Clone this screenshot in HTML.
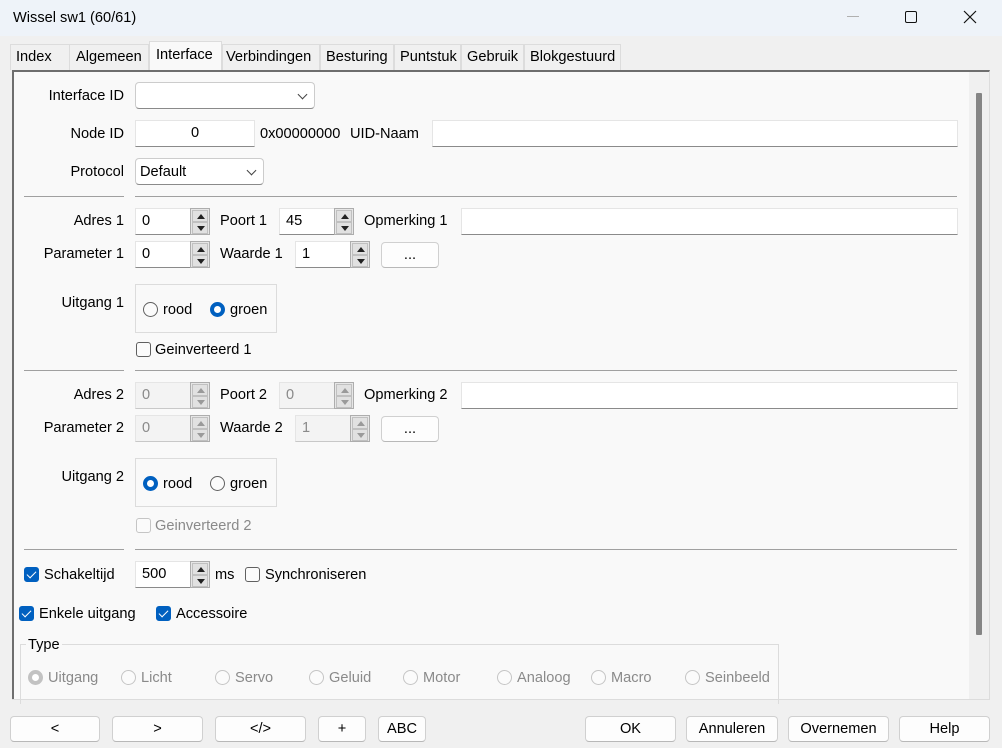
<!DOCTYPE html>
<html><head><meta charset="utf-8"><style>
*{box-sizing:border-box;margin:0;padding:0}
body{width:1002px;height:748px;overflow:hidden;background:#f0f0f0;font:14.6px "Liberation Sans",sans-serif;color:#000;position:relative}
.a{position:absolute}
.t{position:absolute;height:18px;line-height:18px;white-space:nowrap}
.r{text-align:right}
.in{position:absolute;background:#fff;border:1px solid #e5e5e5;border-bottom:1px solid #8a8a8a;height:27px;line-height:25px;padding-left:6px}
.dis{background:#f3f3f3;color:#8a8a8a;border-bottom-color:#c8c8c8}
.sp{position:absolute;width:20px;height:27px;border:1px solid #adadad;background:#e6e6e6}
.sp i{position:absolute;left:1px;width:16px;height:12px;background:#e1e1e1;border:1px solid #c0c0c0}
.sp i:before{content:"";position:absolute;left:4px;border-left:4px solid transparent;border-right:4px solid transparent}
.sp .u{top:1px}.sp .u:before{top:3px;border-bottom:5px solid #222}
.sp .d{top:13px}.sp .d:before{top:3px;border-top:5px solid #222}
.sp.x .u:before{border-bottom-color:#9a9a9a}.sp.x .d:before{border-top-color:#9a9a9a}
.cb{position:absolute;background:#fff;border:1px solid #ccc;border-bottom:1px solid #8a8a8a;border-radius:4px;height:27px}
.cb:after{content:"";position:absolute;right:8px;top:8px;width:6px;height:6px;border-right:1px solid #444;border-bottom:1px solid #444;transform:rotate(45deg)}
.btn{position:absolute;background:#fdfdfd;border:1px solid #d0d0d0;border-bottom-color:#b8b8b8;border-radius:4px;height:26px;line-height:24px;text-align:center}
.chk{position:absolute;width:15px;height:15px;border:1px solid #606060;border-radius:3px;background:#fbfbfb}
.chk.on{background:#0060c0;border-color:#0060c0}
.chk.on:after{content:"";position:absolute;left:4px;top:1px;width:4px;height:8px;border-right:1.5px solid #fff;border-bottom:1.5px solid #fff;transform:rotate(45deg)}
.chk.x{border-color:#c5c5c5}
.rad{position:absolute;width:15px;height:15px;border:1px solid #606060;border-radius:50%;background:#fbfbfb}
.rad.on{border:4px solid #0060c0;background:#fff}
.rad.x{border-color:#c5c5c5}
.rad.xo{border:4px solid #c2c2c2;background:#fff}
.g{color:#8a8a8a}
.sep{position:absolute;height:1px;background:#a0a0a0}
.box{position:absolute;border:1px solid #dcdcdc}
</style></head><body>
<div class="a" style="left:0;top:0;width:1002px;height:36px;background:#eef3f9"></div>
<div class="t" style="left:13px;top:9px">Wissel sw1 (60/61)</div>
<div class="a" style="left:847px;top:16px;width:12px;height:1px;background:#b0b0b0"></div>
<div class="a" style="left:905px;top:11px;width:12px;height:12px;border:1.3px solid #111;border-radius:2px"></div>
<svg class="a" style="left:963px;top:10px" width="14" height="14"><path d="M1 1L13 13M13 1L1 13" stroke="#111" stroke-width="1.2"/></svg>

<div class="a" style="left:10px;top:44px;width:60px;height:26px;background:#f0f0f0;border:1px solid #dcdcdc;border-bottom:none"></div>
<div class="t" style="left:16px;top:48px">Index</div>
<div class="a" style="left:69px;top:44px;width:80px;height:26px;border:1px solid #dcdcdc;border-bottom:none"></div>
<div class="t" style="left:76px;top:48px">Algemeen</div>
<div class="a" style="left:149px;top:41px;width:73px;height:30px;background:#f9f9f9;border:1px solid #dcdcdc;border-bottom:none"></div>
<div class="t" style="left:156px;top:46px">Interface</div>
<div class="a" style="left:222px;top:44px;width:98px;height:26px;border:1px solid #dcdcdc;border-bottom:none"></div>
<div class="t" style="left:226px;top:48px">Verbindingen</div>
<div class="a" style="left:320px;top:44px;width:74px;height:26px;border:1px solid #dcdcdc;border-bottom:none"></div>
<div class="t" style="left:326px;top:48px">Besturing</div>
<div class="a" style="left:394px;top:44px;width:67px;height:26px;border:1px solid #dcdcdc;border-bottom:none"></div>
<div class="t" style="left:400px;top:48px">Puntstuk</div>
<div class="a" style="left:461px;top:44px;width:63px;height:26px;border:1px solid #dcdcdc;border-bottom:none"></div>
<div class="t" style="left:467px;top:48px">Gebruik</div>
<div class="a" style="left:524px;top:44px;width:97px;height:26px;border:1px solid #dcdcdc;border-bottom:none"></div>
<div class="t" style="left:530px;top:48px">Blokgestuurd</div>

<div class="a" style="left:12px;top:70px;width:978px;height:630px;background:#f9f9f9;border-top:2px solid #6e6e6e;border-left:2px solid #6e6e6e;border-right:1px solid #dcdcdc;border-bottom:1px solid #dcdcdc"></div>
<div class="a" style="left:969px;top:72px;width:20px;height:627px;background:#f0f0f0"></div>
<div class="a" style="left:976px;top:93px;width:6px;height:542px;background:#858585;border-radius:1px"></div>

<div class="t r" style="left:20px;width:104px;top:87px">Interface ID</div>
<div class="cb" style="left:135px;top:82px;width:180px"></div>
<div class="t r" style="left:20px;width:104px;top:125px">Node ID</div>
<div class="in" style="left:135px;top:120px;width:120px;text-align:center;padding:0">0</div>
<div class="t" style="left:260px;top:125px">0x00000000</div>
<div class="t" style="left:350px;top:125px">UID-Naam</div>
<div class="in" style="left:432px;top:120px;width:526px"></div>
<div class="t r" style="left:20px;width:104px;top:163px">Protocol</div>
<div class="cb" style="left:135px;top:158px;width:129px;line-height:27px;padding-left:4px">Default</div>
<div class="sep" style="left:24px;top:196px;width:100px"></div>
<div class="sep" style="left:135px;top:196px;width:822px"></div>

<div class="t r" style="left:20px;width:104px;top:212px">Adres 1</div>
<div class="in" style="left:135px;top:208px;width:56px">0</div><div class="sp" style="left:190px;top:208px"><i class="u"></i><i class="d"></i></div>
<div class="t" style="left:220px;top:212px">Poort 1</div>
<div class="in" style="left:279px;top:208px;width:56px">45</div><div class="sp" style="left:334px;top:208px"><i class="u"></i><i class="d"></i></div>
<div class="t" style="left:364px;top:212px">Opmerking 1</div>
<div class="in" style="left:461px;top:208px;width:497px"></div>
<div class="t r" style="left:20px;width:104px;top:245px">Parameter 1</div>
<div class="in" style="left:135px;top:241px;width:56px">0</div><div class="sp" style="left:190px;top:241px"><i class="u"></i><i class="d"></i></div>
<div class="t" style="left:220px;top:245px">Waarde 1</div>
<div class="in" style="left:295px;top:241px;width:56px">1</div><div class="sp" style="left:350px;top:241px"><i class="u"></i><i class="d"></i></div>
<div class="btn" style="left:381px;top:242px;width:58px">...</div>
<div class="t r" style="left:20px;width:104px;top:294px">Uitgang 1</div>
<div class="box" style="left:135px;top:284px;width:142px;height:49px"></div>
<div class="rad" style="left:143px;top:302px"></div><div class="t" style="left:163px;top:301px">rood</div>
<div class="rad on" style="left:210px;top:302px"></div><div class="t" style="left:230px;top:301px">groen</div>
<div class="chk" style="left:136px;top:342px"></div><div class="t" style="left:155px;top:341px">Geinverteerd 1</div>
<div class="sep" style="left:24px;top:370px;width:100px"></div>
<div class="sep" style="left:135px;top:370px;width:822px"></div>

<div class="t r" style="left:20px;width:104px;top:386px">Adres 2</div>
<div class="in dis" style="left:135px;top:382px;width:56px">0</div><div class="sp x" style="left:190px;top:382px"><i class="u"></i><i class="d"></i></div>
<div class="t" style="left:220px;top:386px">Poort 2</div>
<div class="in dis" style="left:279px;top:382px;width:56px">0</div><div class="sp x" style="left:334px;top:382px"><i class="u"></i><i class="d"></i></div>
<div class="t" style="left:364px;top:386px">Opmerking 2</div>
<div class="in" style="left:461px;top:382px;width:497px"></div>
<div class="t r" style="left:20px;width:104px;top:419px">Parameter 2</div>
<div class="in dis" style="left:135px;top:415px;width:56px">0</div><div class="sp x" style="left:190px;top:415px"><i class="u"></i><i class="d"></i></div>
<div class="t" style="left:220px;top:419px">Waarde 2</div>
<div class="in dis" style="left:295px;top:415px;width:56px">1</div><div class="sp x" style="left:350px;top:415px"><i class="u"></i><i class="d"></i></div>
<div class="btn" style="left:381px;top:416px;width:58px">...</div>
<div class="t r" style="left:20px;width:104px;top:468px">Uitgang 2</div>
<div class="box" style="left:135px;top:458px;width:142px;height:49px"></div>
<div class="rad on" style="left:143px;top:476px"></div><div class="t" style="left:163px;top:475px">rood</div>
<div class="rad" style="left:210px;top:476px"></div><div class="t" style="left:230px;top:475px">groen</div>
<div class="chk x" style="left:136px;top:518px"></div><div class="t g" style="left:155px;top:517px">Geinverteerd 2</div>
<div class="sep" style="left:24px;top:549px;width:100px"></div>
<div class="sep" style="left:135px;top:549px;width:822px"></div>

<div class="chk on" style="left:24px;top:567px"></div><div class="t" style="left:44px;top:566px">Schakeltijd</div>
<div class="in" style="left:135px;top:561px;width:56px">500</div><div class="sp" style="left:190px;top:561px"><i class="u"></i><i class="d"></i></div>
<div class="t" style="left:215px;top:566px">ms</div>
<div class="chk" style="left:245px;top:567px"></div><div class="t" style="left:265px;top:566px">Synchroniseren</div>
<div class="chk on" style="left:19px;top:606px"></div><div class="t" style="left:39px;top:605px">Enkele uitgang</div>
<div class="chk on" style="left:156px;top:606px"></div><div class="t" style="left:176px;top:605px">Accessoire</div>

<div class="box" style="left:20px;top:644px;width:759px;height:60px;border-bottom:none"></div>
<div class="t" style="left:26px;top:636px;background:#f9f9f9;padding:0 2px">Type</div>
<div class="rad xo" style="left:28px;top:670px"></div><div class="t g" style="left:48px;top:669px">Uitgang</div>
<div class="rad x" style="left:121px;top:670px"></div><div class="t g" style="left:141px;top:669px">Licht</div>
<div class="rad x" style="left:215px;top:670px"></div><div class="t g" style="left:235px;top:669px">Servo</div>
<div class="rad x" style="left:309px;top:670px"></div><div class="t g" style="left:329px;top:669px">Geluid</div>
<div class="rad x" style="left:403px;top:670px"></div><div class="t g" style="left:423px;top:669px">Motor</div>
<div class="rad x" style="left:497px;top:670px"></div><div class="t g" style="left:517px;top:669px">Analoog</div>
<div class="rad x" style="left:591px;top:670px"></div><div class="t g" style="left:611px;top:669px">Macro</div>
<div class="rad x" style="left:685px;top:670px"></div><div class="t g" style="left:705px;top:669px">Seinbeeld</div>
<div class="a" style="left:12px;top:699px;width:978px;height:1px;background:#dcdcdc"></div>

<div class="btn" style="left:10px;top:716px;width:90px">&lt;</div>
<div class="btn" style="left:112px;top:716px;width:91px">&gt;</div>
<div class="btn" style="left:215px;top:716px;width:91px">&lt;/&gt;</div>
<div class="btn" style="left:318px;top:716px;width:48px">+</div>
<div class="btn" style="left:378px;top:716px;width:48px">ABC</div>
<div class="btn" style="left:585px;top:716px;width:91px">OK</div>
<div class="btn" style="left:686px;top:716px;width:92px">Annuleren</div>
<div class="btn" style="left:788px;top:716px;width:101px">Overnemen</div>
<div class="btn" style="left:899px;top:716px;width:91px">Help</div>
</body></html>
